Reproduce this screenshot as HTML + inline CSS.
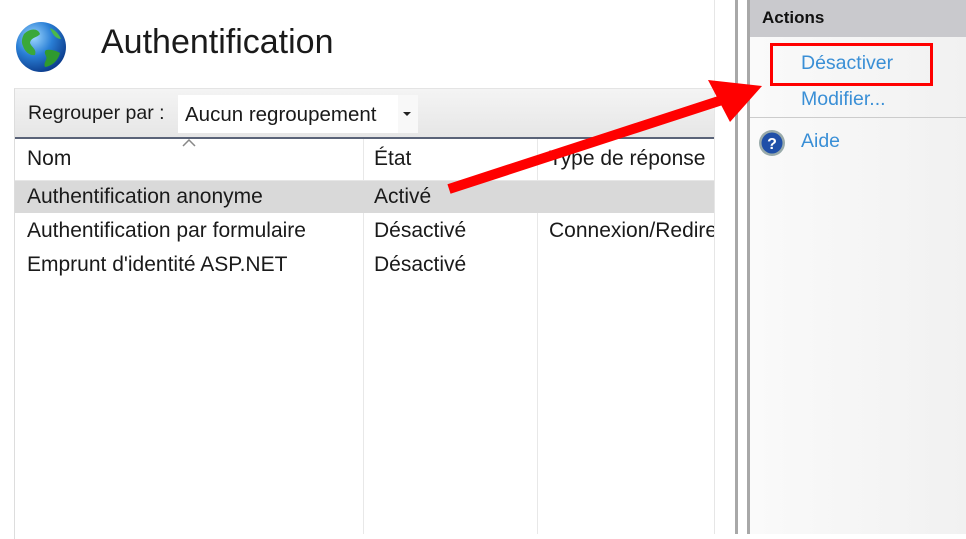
<!DOCTYPE html>
<html><head><meta charset="utf-8">
<style>
body{margin:0;width:966px;height:534px;overflow:hidden;background:#fff;font-family:"Liberation Sans",sans-serif;position:relative}
.a{position:absolute}
.t{font-size:21px;color:#1a1a1a;white-space:nowrap}
</style></head><body>
<svg class="a" style="left:14px;top:20px" width="54" height="54" viewBox="0 0 54 54">
<defs><radialGradient id="g" cx="35%" cy="30%" r="75%"><stop offset="0" stop-color="#9fd8ff"/><stop offset=".5" stop-color="#2a7fd6"/><stop offset="1" stop-color="#0b3a8a"/></radialGradient></defs>
<circle cx="27" cy="27" r="25" fill="url(#g)"/>
<path d="M10 14c6-6 14-6 16 0-3 4-9 3-10 9 2 5 7 6 5 12-5 1-10-3-12-9-2-4-1-8 1-12z" fill="#3aa83a"/>
<path d="M32 30c5-1 11 1 14 3-2 8-8 13-15 14-2-5 3-7 1-11-1-2-2-4 0-6z" fill="#2f9a2f"/>
<path d="M36 8c5 2 9 6 11 11-4 0-8-3-11-11z" fill="#4bb84b"/>
</svg>
<div class="a" style="left:101px;top:23px;font-size:34px;color:#1a1a1a">Authentification</div>

<div class="a" style="left:14px;top:88px;width:700px;height:450px;border-left:1px solid #ddd;border-top:1px solid #e4e4e4"></div>
<div class="a" style="left:15px;top:89px;width:699px;height:48px;background:linear-gradient(#f4f4f4,#e6e6e6)"></div>
<div class="a t" style="left:28px;top:102px;font-size:19.5px">Regrouper par :</div>
<div class="a" style="left:178px;top:95px;width:220px;height:38px;background:#fff"></div>
<div class="a t" style="left:185px;top:103px;font-size:20.5px">Aucun regroupement</div>
<div class="a" style="left:398px;top:95px;width:20px;height:38px;background:#f8f8f8"></div>
<div class="a" style="left:403px;top:112px;width:0;height:0;border-left:4px solid transparent;border-right:4px solid transparent;border-top:4px solid #222"></div>
<div class="a" style="left:15px;top:137px;width:699px;height:2px;background:#5a6378"></div>
<svg class="a" style="left:182px;top:139px" width="14" height="8"><path d="M1 7L7 1L13 7" stroke="#888" fill="none" stroke-width="1.5"/></svg>
<div class="a" style="left:363px;top:139px;width:1px;height:395px;background:#e8e8e8"></div>
<div class="a" style="left:537px;top:139px;width:1px;height:395px;background:#e8e8e8"></div>
<div class="a" style="left:15px;top:180px;width:699px;height:1px;background:#e6e6e6"></div>
<div class="a t" style="left:27px;top:147px">Nom</div>
<div class="a t" style="left:374px;top:147px">État</div>
<div class="a t" style="left:549px;top:147px">Type de réponse</div>
<div class="a" style="left:15px;top:181px;width:699px;height:32px;background:#d9d9d9"></div>
<div class="a t" style="left:27px;top:185px">Authentification anonyme</div>
<div class="a t" style="left:374px;top:185px">Activé</div>
<div class="a t" style="left:27px;top:219px">Authentification par formulaire</div>
<div class="a t" style="left:374px;top:219px">Désactivé</div>
<div class="a t" style="left:549px;top:219px;width:165px;overflow:hidden">Connexion/Redirection</div>
<div class="a t" style="left:27px;top:253px">Emprunt d'identité ASP.NET</div>
<div class="a t" style="left:374px;top:253px">Désactivé</div>

<div class="a" style="left:714px;top:0;width:1px;height:534px;background:#e6e6e6"></div>
<div class="a" style="left:735px;top:0;width:3px;height:534px;background:#a8a8a8"></div>
<div class="a" style="left:747px;top:0;width:3px;height:534px;background:#a8a8a8"></div>
<div class="a" style="left:750px;top:0;width:216px;height:534px;background:linear-gradient(90deg,#fafafa,#f1f1f1)"></div>
<div class="a" style="left:750px;top:0;width:216px;height:37px;background:#c9c9cd"></div>
<div class="a" style="left:762px;top:8px;font-size:17px;font-weight:bold;color:#111">Actions</div>
<div class="a" style="left:801px;top:52px;font-size:19.5px;color:#3a8fd6">Désactiver</div>
<div class="a" style="left:801px;top:88px;font-size:19.5px;color:#3a8fd6">Modifier...</div>
<div class="a" style="left:750px;top:117px;width:216px;height:1px;background:#ccc"></div>
<svg class="a" style="left:758px;top:129px" width="28" height="28" viewBox="0 0 28 28"><circle cx="14" cy="14" r="13" fill="#9aa"/><circle cx="14" cy="14" r="10.5" fill="#1f4fa8"/><text x="14" y="20" font-size="16" font-weight="bold" text-anchor="middle" fill="#fff" font-family="Liberation Sans">?</text></svg>
<div class="a" style="left:801px;top:130px;font-size:19.5px;color:#3a8fd6">Aide</div>
<div class="a" style="left:770px;top:43px;width:157px;height:37px;border:3px solid #f00"></div>
<svg class="a" style="left:0;top:0" width="966" height="534"><path d="M449 189L722 100" stroke="#f00" stroke-width="10"/><path d="M708 80L762 86L730 122Z" fill="#f00"/></svg>
</body></html>
